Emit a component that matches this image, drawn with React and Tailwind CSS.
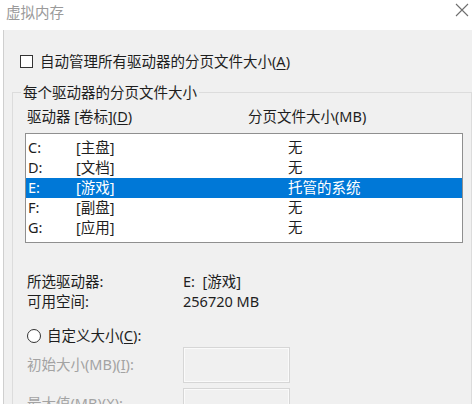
import React from "react";

const drives = [
  { letter: "C:", label: "[主盘]", size: "无" },
  { letter: "D:", label: "[文档]", size: "无" },
  { letter: "E:", label: "[游戏]", size: "托管的系统", selected: true },
  { letter: "F:", label: "[副盘]", size: "无" },
  { letter: "G:", label: "[应用]", size: "无" },
];

const font = {
  fontFamily: '"Noto Sans", "Noto Sans CJK SC", sans-serif',
};

export default function App() {
  return (
    <div
      className="w-[475px] h-[404px] bg-white overflow-hidden flex flex-col text-[14.5px] text-[#1e1e1e]"
      style={font}
    >
      {/* 标题栏 */}
      <div className="h-[30px] w-[475px] shrink-0 flex items-start pl-[6px]">
        <span className="text-[#9a9a9a] leading-none mt-[5px]">虚拟内存</span>
        <svg width="14" height="14" viewBox="0 0 14 14" className="ml-auto mr-[6px] mt-[3px] shrink-0">
          <path d="M1 1 L13 13 M13 1 L1 13" stroke="#6e6e6e" strokeWidth="1.1" fill="none" />
        </svg>
      </div>

      {/* 窗体 */}
      <div className="flex-1 ml-[3px] w-[469px] bg-[#f0f0f0] border-l border-[#cfcfcf] pl-[8px] pt-[21px] overflow-hidden">
        <div className="h-[20px] ml-[8px] flex items-center gap-[7px]">
          <span className="w-[13px] h-[13px] border border-[#333] bg-white shrink-0" />
          <span className="leading-none">
            自动管理所有驱动器的分页文件大小(<span className="underline underline-offset-2">A</span>)
          </span>
        </div>

        <fieldset className="mt-[11px] w-[453px] h-[340px] border border-[#dcdcdc] px-[8px] pt-[5px]">
          <legend className="px-[2px] h-[20px] leading-[20px]">每个驱动器的分页文件大小</legend>

          <div className="h-[20px] flex items-center pl-[6px]">
            <span className="w-[221px]">
              驱动器 [卷标](<span className="underline underline-offset-2">D</span>)
            </span>
            <span>分页文件大小(MB)</span>
          </div>

          <div className="mt-[6px] ml-[4px] w-[438px] h-[110px] border border-[#8f8f8f] bg-white pt-[4px]">
            {drives.map((d) => (
              <div
                key={d.letter}
                className={`h-[20px] flex items-center pl-[2px] ${
                  d.selected ? "bg-[#0078d7] text-white" : ""
                }`}
              >
                <span className="w-[48px]">{d.letter}</span>
                <span className="w-[212px]">{d.label}</span>
                <span>{d.size}</span>
              </div>
            ))}
          </div>

          <div className="mt-[29px] h-[20px] flex items-center pl-[6px]">
            <span className="w-[156px]">所选驱动器:</span>
            <span>E:&nbsp;&nbsp;[游戏]</span>
          </div>
          <div className="h-[20px] flex items-center pl-[6px]">
            <span className="w-[156px]">可用空间:</span>
            <span>256720 MB</span>
          </div>

          <div className="mt-[14px] h-[20px] flex items-center gap-[6px] pl-[6px]">
            <span className="w-[14px] h-[14px] rounded-full border border-[#333] bg-white shrink-0" />
            <span>
              自定义大小(<span className="underline underline-offset-2">C</span>):
            </span>
          </div>

          <div className="mt-[1px] h-[36px] flex items-center pl-[6px] text-[#a3a3a3]">
            <span className="w-[156px]">
              初始大小(MB)(<span className="underline underline-offset-2">I</span>):
            </span>
            <span className="w-[107px] h-[36px] border border-[#d6d6d6] shadow-[inset_0_0_0_1px_#fafafa] bg-[#f0f0f0]" />
          </div>
          <div className="mt-[5px] h-[36px] flex items-start pl-[6px] text-[#a3a3a3]">
            <span className="w-[156px] mt-[5px]">
              最大值(MB)(<span className="underline underline-offset-2">X</span>):
            </span>
            <span className="w-[107px] h-[36px] border border-[#d6d6d6] shadow-[inset_0_0_0_1px_#fafafa] bg-[#f0f0f0]" />
          </div>
        </fieldset>
      </div>
    </div>
  );
}
